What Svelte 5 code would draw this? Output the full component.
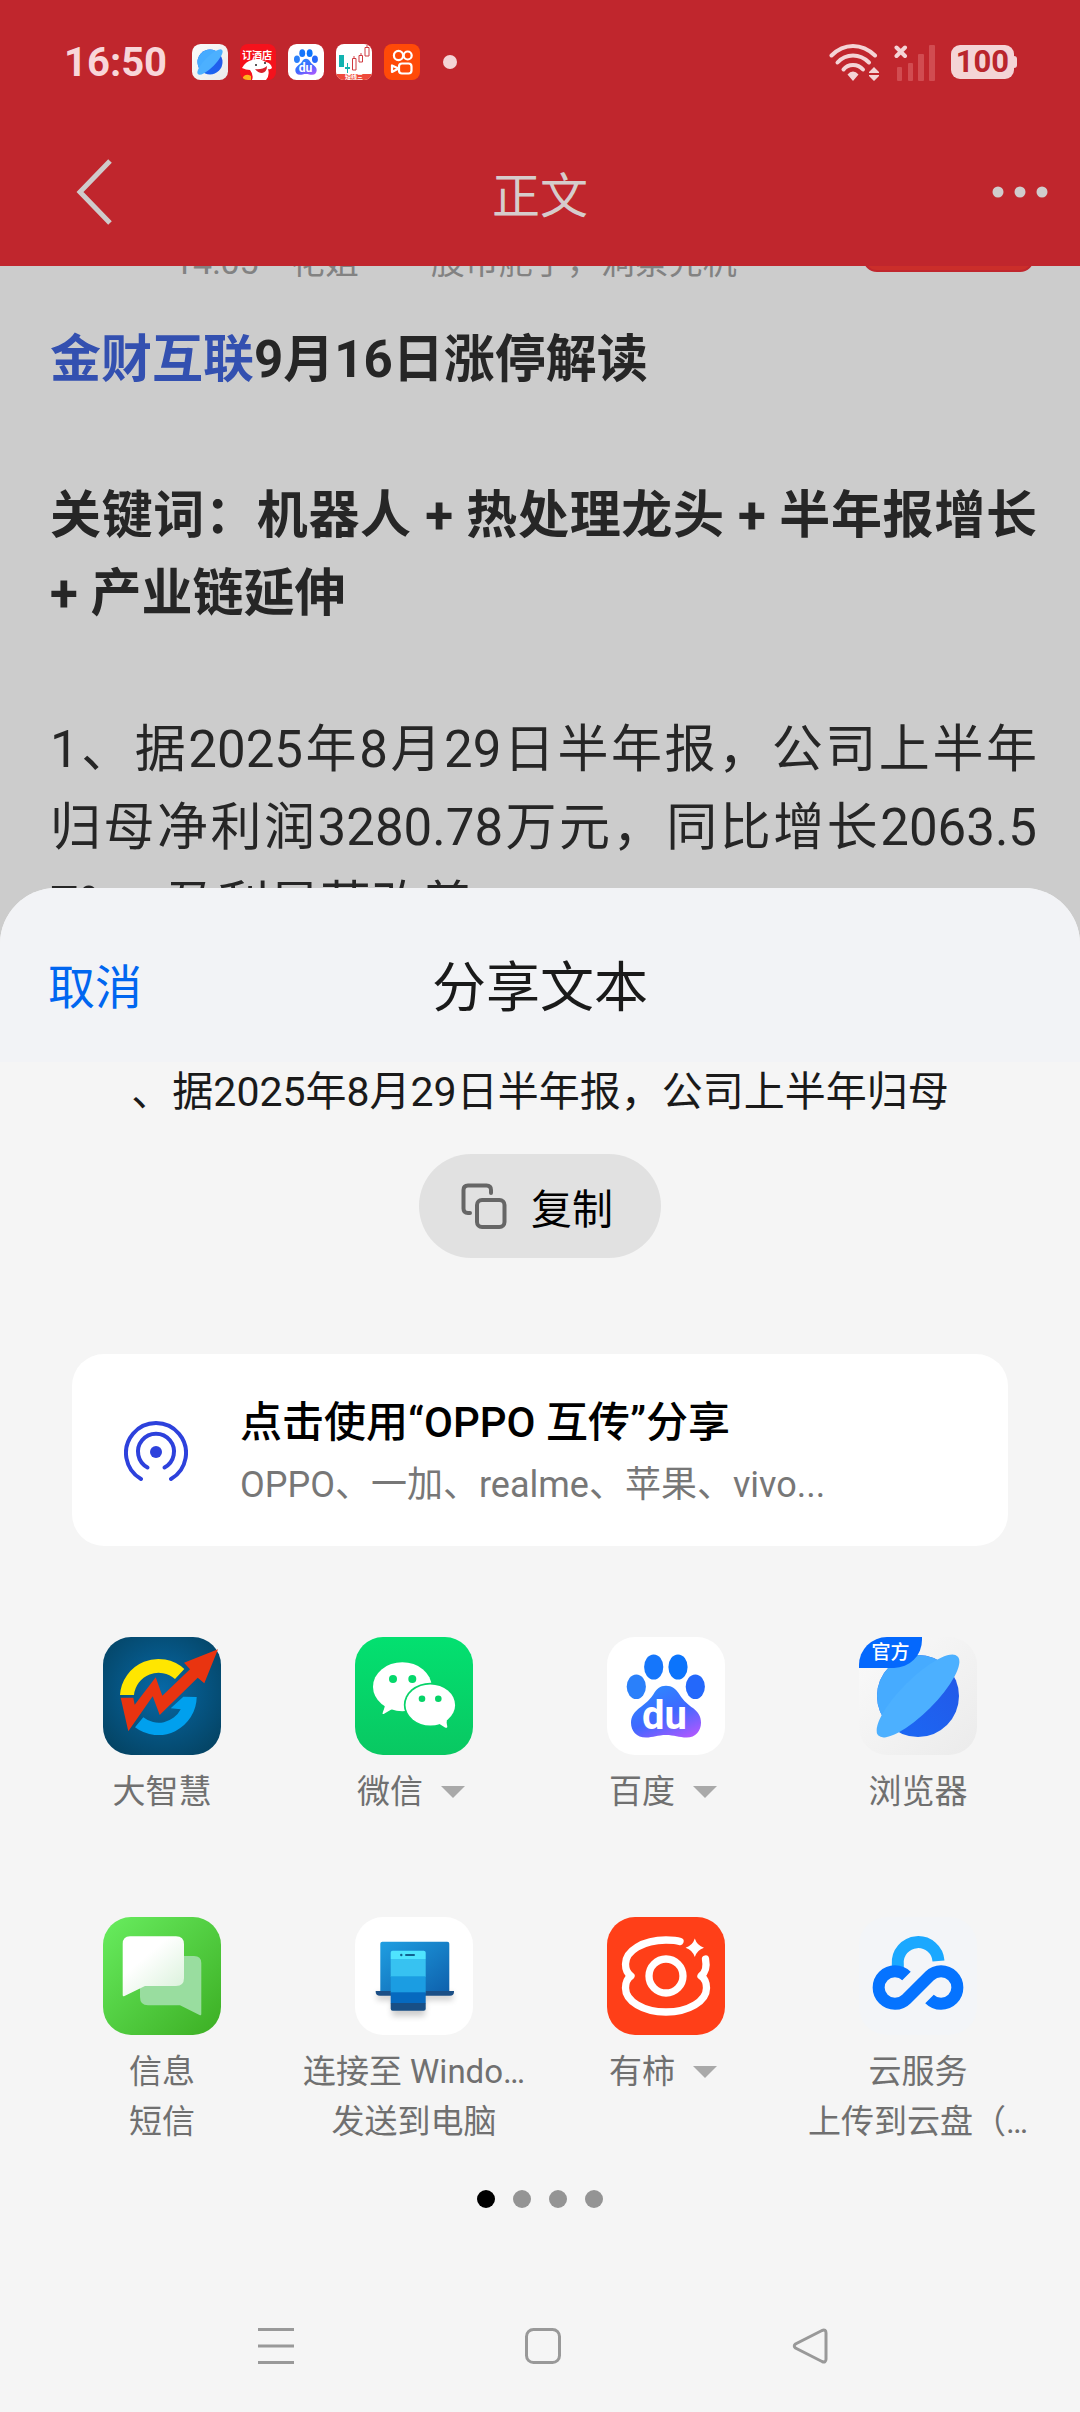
<script>
  const apps = [
    { icon: dzh, name: '大智慧' },
    { icon: wechat, name: '微信', more: true },
    { icon: baidu, name: '百度', more: true },
    { icon: browser, name: '浏览器', badge: '官方' },
    { icon: messages, name: '信息', detail: '短信' },
    { icon: phonelink, name: '连接至 Windo…', detail: '发送到电脑' },
    { icon: youshi, name: '有柿', more: true },
    { icon: cloud, name: '云服务', detail: '上传到云盘（…' }
  ]
  const notices = [browser, hotel, baidu, stocks, kwai]
  const pages = 4

  let page = $state(0)
</script>

{#snippet dzh()}
  <svg viewBox="0 0 118 118">
    <defs>
      <radialGradient id="dzh-bg" cx=".5" cy=".45" r=".7">
        <stop offset="0" stop-color="#0768a6" />
        <stop offset="1" stop-color="#04415f" />
      </radialGradient>
    </defs>
    <rect width="118" height="118" rx="28" fill="url(#dzh-bg)" />
    <path d="M17 58A38.5 38.5 0 0 1 81.3 32L72 42A24.7 24.7 0 0 0 31 58Z" fill="#ffe600" />
    <path d="M93.7 60A38.5 38.5 0 0 1 32 90.3L40.3 80.3A24.7 24.7 0 0 0 77.7 72.3L67.7 71.3L80.3 59.7Z" fill="#00a0ee" />
    <path d="M17.7 60.7L30.3 60.7L31.7 67.7L52.7 40.3L59.3 58.7L87 32.3L81 25.7L115 12.3L101.3 46.3L94.7 40.7L56.7 78L49.7 59.3L25.3 94.3Z" fill="#e93410" />
  </svg>
{/snippet}

{#snippet wechat()}
  <svg viewBox="0 0 118 118">
    <defs>
      <linearGradient id="wechat-bg" x2="0" y2="1">
        <stop offset="0" stop-color="#03e070" />
        <stop offset="1" stop-color="#09c862" />
      </linearGradient>
    </defs>
    <rect width="118" height="118" rx="28" fill="url(#wechat-bg)" />
    <g fill="#fff">
      <ellipse cx="47.3" cy="49.7" rx="29.3" ry="24.5" />
      <path d="M30 67C30 71 28 74 27.5 76.5Q28 77.5 29.5 76.5L38 71.5Q42 73.5 50 74L48 60Z" />
    </g>
    <circle cx="38" cy="42" r="4" fill="#05d86b" />
    <circle cx="57.3" cy="42" r="4" fill="#05d86b" />
    <ellipse cx="75.3" cy="68" rx="26.5" ry="22.2" fill="#06d368" />
    <g fill="#fff">
      <ellipse cx="75.3" cy="68" rx="24.8" ry="20.5" />
      <path d="M92 83C91 86 92.5 88.5 92.3 90Q91.7 91.5 90 90.4L84.5 87L76 88Z" />
    </g>
    <circle cx="67" cy="61.7" r="3.3" fill="#05d367" />
    <circle cx="83.3" cy="61.7" r="3.3" fill="#05d367" />
  </svg>
{/snippet}

{#snippet baidu()}
  <svg viewBox="0 0 118 118">
    <defs>
      <linearGradient id="baidu-paw" x1=".2" y1="0" x2=".8" y2="1">
        <stop offset="0" stop-color="#2b8bff" />
        <stop offset=".55" stop-color="#3f68ff" />
        <stop offset="1" stop-color="#a959ff" />
      </linearGradient>
    </defs>
    <rect width="118" height="118" rx="28" fill="#fff" />
    <ellipse cx="29.3" cy="49.7" rx="9.6" ry="12.3" fill="#2a80fa" />
    <ellipse cx="46.7" cy="30" rx="9.6" ry="12.6" fill="#1576fb" />
    <ellipse cx="71" cy="30" rx="9.6" ry="12.6" fill="#0b74fc" />
    <ellipse cx="88.3" cy="49.7" rx="9.6" ry="12.3" fill="#2368fb" />
    <path d="M59 48.7C65 48.7 69 52 72.5 57.5C77 64.5 81 67.5 86.3 71.3C91 75 94 79.5 94 85.7C94 94 88.5 100.5 79.7 100.5C72 100.5 67 98 59 98C51 98 46 100.5 39 100.5C29.5 100.5 24 94 24 85.7C24 79.5 27.5 75 32 71.3C37 67.5 41.5 64.5 46.3 57.5C49.5 52 53 48.7 59 48.7Z" fill="url(#baidu-paw)" />
    <text x="57.5" y="92.3" text-anchor="middle" font-size="40" font-weight="700" fill="#fff">du</text>
  </svg>
{/snippet}

{#snippet browser()}
  <svg viewBox="0 0 118 118">
    <defs>
      <linearGradient id="browser-bg" x2="1" y2="1">
        <stop offset="0" stop-color="#fafafa" />
        <stop offset="1" stop-color="#ebebeb" />
      </linearGradient>
      <linearGradient id="browser-dark" x1="1" y1="0" x2="0" y2="1">
        <stop offset="0" stop-color="#2456e6" />
        <stop offset="1" stop-color="#1a6af6" />
      </linearGradient>
    </defs>
    <rect width="118" height="118" rx="28" fill="url(#browser-bg)" />
    <circle cx="59" cy="59" r="41" fill="url(#browser-dark)" />
    <path d="M88 30A41 41 0 1 0 30 88Z" fill="#46abff" />
    <ellipse cx="59" cy="59" rx="56" ry="17" transform="rotate(-45 59 59)" fill="#4cb0ff" />
  </svg>
{/snippet}

{#snippet messages()}
  <svg viewBox="0 0 118 118">
    <defs>
      <linearGradient id="msg-bg" x2="1" y2="1">
        <stop offset="0" stop-color="#68ed5f" />
        <stop offset="1" stop-color="#3cae23" />
      </linearGradient>
      <linearGradient id="msg-front" x1=".2" y1=".2" x2=".9" y2="1">
        <stop offset=".2" stop-color="#fff" />
        <stop offset="1" stop-color="#d9f1da" />
      </linearGradient>
    </defs>
    <rect width="118" height="118" rx="28" fill="url(#msg-bg)" />
    <path d="M45 39H91Q98.3 39 98.3 46V97Q98.3 98.8 96.5 98L77 88.3H45Q37 88.3 37 80V47Q37 39 45 39Z" fill="#99dd9f" />
    <path d="M27 19.3H73Q81 19.3 81 27.3V61Q81 69 73 69H42L21.5 79Q19.7 79.8 19.7 78V27Q19.7 19.3 27 19.3Z" fill="url(#msg-front)" />
  </svg>
{/snippet}

{#snippet phonelink()}
  <svg viewBox="0 0 118 118">
    <defs>
      <linearGradient id="link-screen" x2="1" y2="1">
        <stop offset="0" stop-color="#1f9fe2" />
        <stop offset="1" stop-color="#0e60ac" />
      </linearGradient>
      <filter id="link-blur" x="-30%" y="-60%" width="160%" height="220%">
        <feGaussianBlur stdDeviation="3" />
      </filter>
      <clipPath id="link-phone"><rect x="35.7" y="33.7" width="35" height="60" rx="2" /></clipPath>
    </defs>
    <rect width="118" height="118" rx="28" fill="#fff" />
    <g filter="url(#link-blur)" fill="#000" opacity=".2">
      <rect x="22" y="76" width="76" height="7" />
      <rect x="37" y="80" width="33" height="19" />
    </g>
    <rect x="25.3" y="24.7" width="69" height="51" rx="2" fill="url(#link-screen)" />
    <path d="M20.7 74H99V75Q99 78.7 95 78.7H25Q20.7 78.7 20.7 75Z" fill="#1b4f86" />
    <g clip-path="url(#link-phone)">
      <rect x="35" y="33" width="37" height="9" fill="#4fe4fe" />
      <rect x="35" y="42" width="37" height="18" fill="#37c2f1" />
      <rect x="35" y="59.3" width="37" height="17" fill="#1b9de2" />
      <rect x="35" y="75.3" width="37" height="11" fill="#0669bf" />
      <rect x="35" y="86" width="37" height="8" fill="#184f86" />
    </g>
    <circle cx="46.3" cy="38" r="1.2" fill="#12608f" />
    <rect x="50" y="37" width="10" height="2" rx="1" fill="#12608f" />
  </svg>
{/snippet}

{#snippet youshi()}
  <svg viewBox="0 0 118 118">
    <rect width="118" height="118" rx="28" fill="#ff3f18" />
    <g fill="none" stroke="#fff" stroke-width="7.3" stroke-linecap="round" stroke-linejoin="round">
      <path d="M73 24.5C69 23 64 23 59 23C36 23 18.5 34 18.5 47C18.5 53 21 57 24 59C21 61 18.5 65 18.5 71C18.5 84 36 95 59 95C82 95 99.5 84 99.5 71C99.5 65 97 61 94 59C98 56 100 50 98.5 42" />
      <circle cx="59" cy="59" r="17" />
    </g>
    <path d="M87.8 21.5Q90 28.5 97 30.7Q90 33 87.8 40Q85.6 33 78.6 30.7Q85.6 28.5 87.8 21.5Z" fill="#fff" />
  </svg>
{/snippet}

{#snippet cloud()}
  <svg viewBox="0 0 118 118">
    <rect width="118" height="118" rx="28" fill="#f3f5f8" />
    <g fill="none" stroke-width="12">
      <path d="M38.8 51V47A20.3 20.3 0 0 1 79.5 44" stroke="#1aa8ff" />
      <path d="M47.5 59A16.3 16.3 0 1 0 47.5 82L70.5 59A16.3 16.3 0 1 1 70.5 82" stroke="#0573ff" />
    </g>
  </svg>
{/snippet}

{#snippet hotel()}
  <svg viewBox="0 0 36 36">
    <clipPath id="hotel-clip"><rect width="36" height="36" rx="8" /></clipPath>
    <g clip-path="url(#hotel-clip)">
      <rect width="36" height="36" fill="#f5121c" />
      <text x="17" y="15" text-anchor="middle" font-size="10" font-weight="700" fill="#fff">订酒店</text>
      <path d="M2 24Q6 17 12 16Q20 14 26 18Q31 19 32 24Q30 26 28 25Q30 31 26 36H12Q14 31 10 26Q6 26 2 24Z" fill="#fff" />
      <path d="M15 25Q22 26 27 22Q27 28 22 29Q18 29 15 25Z" fill="#d8232c" />
      <circle cx="16" cy="21" r="1" fill="#222" />
      <circle cx="25" cy="19" r="1" fill="#222" />
      <path d="M3 33Q6 29 11 32V36H3Z" fill="#ffb21c" />
    </g>
  </svg>
{/snippet}

{#snippet stocks()}
  <svg viewBox="0 0 36 36">
    <clipPath id="stocks-clip"><rect width="36" height="36" rx="8" /></clipPath>
    <g clip-path="url(#stocks-clip)">
      <rect width="36" height="36" fill="#fff" />
      <path d="M3 11H8V23H3ZM9 23H14V25H9ZM11 19H12V29H11Z" fill="#12b3b0" />
      <path d="M16.5 14.5H20V26H16.5ZM23 11.5H26.5V18H23ZM29 3.5H33V12H29ZM18 12V14M25 9V11M31 1V3" fill="none" stroke="#cf3a40" />
      <rect y="30" width="36" height="6" fill="#ee4a3c" />
      <text x="18" y="35" text-anchor="middle" font-size="6" font-weight="700" fill="#fff">短线三</text>
    </g>
  </svg>
{/snippet}

{#snippet kwai()}
  <svg viewBox="0 0 36 36">
    <rect width="36" height="36" rx="8" fill="#ff4a08" />
    <g fill="none" stroke="#fff" stroke-width="2.2" stroke-linejoin="round">
      <circle cx="14.5" cy="11.5" r="4.6" />
      <circle cx="23.7" cy="11.5" r="4" />
      <rect x="15" y="19.5" width="12.5" height="10" rx="3" />
      <path d="M14.5 24.5L8 21.5V28Z" />
    </g>
  </svg>
{/snippet}

<div class="screen">
  <div class="status">
    <time>16:50</time>
    <div class="notices">
      {#each notices as icon}
        <span class="notice">{@render icon()}</span>
      {/each}
      <i></i>
    </div>
    <div class="signals">
      <svg width="50" height="38" viewBox="0 0 50 38">
        <g fill="none" stroke="#f4d4d6" stroke-width="4" stroke-linecap="round">
          <path d="M2.5 12.5Q12 3 24 3Q36 3 46 12.5" />
          <path d="M8.5 19.5Q15 12.5 24 12.5Q33 12.5 40 19.5" />
          <path d="M14.5 26.5Q18 22 24 22Q30 22 34 26.5" />
        </g>
        <path d="M24 38L18.5 31.5Q21 28.5 24 28.5Q27 28.5 29.5 31.5ZM45 24L50 29V30H40V29ZM45 38L50 33V32H40V33Z" fill="#f4d4d6" />
      </svg>
      <svg width="42" height="38" viewBox="0 0 42 38">
        <path d="M2.5 4.5L11 13M11 4.5L2.5 13" stroke="#f4d4d6" stroke-width="4" stroke-linecap="round" />
        <g fill="#d14c51">
          <rect x="3" y="24" width="5" height="14" rx="1" />
          <rect x="14" y="20" width="5" height="18" rx="1" />
          <rect x="24" y="11" width="6" height="27" rx="1" />
          <rect x="35" y="2" width="6" height="36" rx="1" />
        </g>
      </svg>
      <span class="battery">100</span>
    </div>
  </div>

  <header>
    <button class="back" aria-label="返回">
      <svg width="40" height="68" viewBox="0 0 40 68">
        <path d="M36 3L6 34L36 65" fill="none" stroke="#cfcbcb" stroke-width="5" />
      </svg>
    </button>
    <h1>正文</h1>
    <button class="more" aria-label="更多">
      <svg width="56" height="12" viewBox="0 0 56 12" fill="#d0cccc">
        <circle cx="6" cy="6" r="5.5" />
        <circle cx="28" cy="6" r="5.5" />
        <circle cx="50" cy="6" r="5.5" />
      </svg>
    </button>
  </header>

  <article>
    <div class="byline">
      <span>14:05</span>
      <span class="author">花姐</span>
      <span class="motto">股市舵手，洞察先机</span>
      <button class="follow" aria-label="关注"></button>
    </div>
    <h2><a href="#stock">金财互联</a>9月16日涨停解读</h2>
    <h2>
      <span class="full">关键词：机器人 + 热处理龙头 + 半年报增长</span>
      <span>+ 产业链延伸</span>
    </h2>
    <p>
      <span class="full">1、据2025年8月29日半年报，公司上半年</span>
      <span class="full">归母净利润3280.78万元，同比增长2063.5</span>
      <span>7%，盈利显著改善</span>
    </p>
  </article>

  <section class="sheet">
    <div class="bar">
      <button class="cancel">取消</button>
      <h3>分享文本</h3>
    </div>
    <p class="preview">、据2025年8月29日半年报，公司上半年归母</p>
    <button class="copy">
      <svg width="46" height="46" viewBox="0 0 46 46" fill="none" stroke="#666" stroke-width="4" stroke-linecap="round">
        <path d="M30 10V7Q30 2.5 25.5 2.5H7Q2.5 2.5 2.5 7V25.5Q2.5 30 7 30H9" />
        <rect x="16" y="17" width="27.5" height="27" rx="5" />
      </svg>
      复制
    </button>

    <button class="oshare">
      <svg width="64" height="64" viewBox="0 0 64 64" fill="none" stroke="#2d41dc" stroke-width="4" stroke-linecap="round">
        <path d="M17 59A30 30 0 1 1 47 59" />
        <path d="M23.5 47.5A18 18 0 1 1 40.5 47.5" />
        <circle cx="32" cy="32" r="6" fill="#2d41dc" stroke="none" />
      </svg>
      <span class="text">
        <strong>点击使用“OPPO 互传”分享</strong>
        <small>OPPO、一加、realme、苹果、vivo...</small>
      </span>
    </button>

    <div class="apps">
      {#each apps as app}
        <button class="app">
          <span class="icon">
            {@render app.icon()}
            {#if app.badge}<b>{app.badge}</b>{/if}
          </span>
          <span class="name" class:expand={app.more}>{app.name}</span>
          {#if app.detail}<span class="name">{app.detail}</span>{/if}
        </button>
      {/each}
    </div>

    <div class="dots">
      {#each { length: pages } as _, i}
        <button class:active={page === i} aria-label="第 {i + 1} 页" onclick={() => page = i}></button>
      {/each}
    </div>

    <nav>
      <button aria-label="最近任务">
        <svg width="36" height="36" viewBox="0 0 36 36" fill="none" stroke="#999" stroke-width="3">
          <path d="M0 1.5H36M0 18H36M0 34.5H36" />
        </svg>
      </button>
      <button aria-label="主屏幕">
        <svg width="36" height="36" viewBox="0 0 36 36" fill="none" stroke="#999" stroke-width="3">
          <rect x="1.5" y="1.5" width="33" height="33" rx="7" />
        </svg>
      </button>
      <button aria-label="返回上级">
        <svg width="36" height="36" viewBox="0 0 36 36" fill="none" stroke="#999" stroke-width="3">
          <path d="M30 2.5L3.5 16Q1 18 3.5 20L30 33.5Q34 35 34 31V5Q34 1 30 2.5Z" />
        </svg>
      </button>
    </nav>
  </section>
</div>

<style>
  :global(body) {
    margin: 0;
    background: #f5f5f5;
  }

  .screen {
    display: flex;
    flex-direction: column;
    min-height: 100vh;
    background: #ccc;
    color: #262626;
    font-family: Roboto, 'Noto Sans CJK SC', sans-serif;
  }

  h1, h2, h3, p {
    margin: 0;
    font-weight: 400;
  }

  button {
    padding: 0;
    border: none;
    background: none;
    color: inherit;
    font: inherit;
    cursor: pointer;
  }

  svg {
    display: block;
    flex: none;
  }

  .status {
    display: flex;
    align-items: center;
    height: 124px;
    padding: 0 63px 0 64px;
    background: #c0262d;
    color: #f8d6d9;
  }

  time {
    font-size: 40px;
    font-weight: 700;
  }

  .notices {
    display: flex;
    align-items: center;
    gap: 12px;
    flex: 1;
    margin-left: 25px;
  }

  .notice {
    width: 36px;
  }

  .notices i {
    width: 14px;
    height: 14px;
    margin-left: 11px;
    border-radius: 50%;
    background: #f4d4d6;
  }

  .signals {
    display: flex;
    align-items: center;
    gap: 15px;
  }

  .battery {
    position: relative;
    padding: 0 5px;
    border-radius: 9px;
    margin-right: 3px;
    background: #f4d4d6;
    color: #b9252c;
    font-size: 31px;
    font-weight: 700;
    line-height: 34px;
  }

  .battery::after {
    content: '';
    position: absolute;
    top: 11px;
    right: -3px;
    width: 4px;
    height: 12px;
    border-radius: 0 3px 3px 0;
    background: #f4d4d6;
  }

  header {
    display: grid;
    grid-template-columns: 1fr auto 1fr;
    align-items: center;
    height: 142px;
    padding: 0 32px 6px;
    box-sizing: border-box;
    background: #c0262d;
    color: #d6cccc;
  }

  h1 {
    font-size: 48px;
  }

  .back {
    justify-self: start;
    margin-left: 42px;
  }

  .more {
    justify-self: end;
  }

  /* The text runs on behind the rounded top of the sheet */
  article {
    flex: 1 1 0;
    min-height: 0;
    margin-bottom: -56px;
    padding: 0 43px 0 50px;
    overflow: hidden;
    font-size: 51px;
    line-height: 78px;
  }

  .byline {
    display: flex;
    align-items: flex-end;
    height: 70px;
    margin: -54px 0 39px;
    padding-left: 124px;
    color: #828282;
    font-size: 34px;
    line-height: 40px;
  }

  .author {
    margin: 0 72px 0 32px;
  }

  .motto {
    flex: 1;
  }

  .follow {
    align-self: flex-start;
    width: 171px;
    height: 60px;
    margin-right: 3px;
    border: 2px solid #c0262d;
    border-radius: 14px;
    background: #cb2e2a;
  }

  h2 {
    margin-bottom: 78px;
    font-size: 51px;
    font-weight: 700;
  }

  h2 a {
    color: #3350b0;
    text-decoration: none;
  }

  h2 span, article p span {
    display: block;
    white-space: nowrap;
  }

  article .full {
    text-align: justify;
    text-align-last: justify;
  }

  .sheet {
    position: relative;
    display: flex;
    flex-direction: column;
    align-items: center;
    border-radius: 56px 56px 0 0;
    background: #f5f5f5;
    overflow: hidden;
  }

  .bar {
    display: grid;
    grid-template-columns: 1fr auto 1fr;
    align-items: center;
    align-self: stretch;
    height: 174px;
    padding: 16px 48px 0;
    box-sizing: border-box;
    background: #f2f3f6;
  }

  .cancel {
    justify-self: start;
    color: #0066f0;
    font-size: 47px;
  }

  h3 {
    color: #1a1a1a;
    font-size: 54px;
  }

  .preview {
    color: #1a1a1a;
    font-size: 41px;
    line-height: 60px;
  }

  .copy {
    display: flex;
    align-items: center;
    gap: 24px;
    height: 104px;
    margin-top: 32px;
    padding: 0 48px 0 42px;
    border-radius: 52px;
    background: #e1e1e1;
    color: #000;
    font-size: 41px;
  }

  .oshare {
    display: flex;
    align-items: center;
    align-self: stretch;
    gap: 52px;
    height: 192px;
    margin: 96px 72px 0;
    padding: 4px 52px 0;
    border-radius: 32px;
    background: #fff;
    text-align: left;
  }

  .text {
    display: flex;
    flex-direction: column;
    padding-top: 4px;
  }

  strong {
    color: #000;
    font-size: 42px;
    font-weight: 500;
    line-height: 62px;
  }

  small {
    color: #777;
    font-size: 36px;
    line-height: 62px;
  }

  .apps {
    display: grid;
    grid-template-columns: repeat(4, 1fr);
    align-self: stretch;
    gap: 50px 0;
    margin-top: 91px;
    padding: 0 36px;
  }

  .app {
    display: flex;
    flex-direction: column;
    align-items: center;
    min-height: 230px;
    color: #707070;
    font-size: 33px;
  }

  .icon {
    position: relative;
    width: 118px;
    margin-bottom: 12px;
  }

  .icon b {
    position: absolute;
    top: 0;
    left: 0;
    width: 63px;
    border-radius: 28px 0 28px 0;
    background: #0468fd;
    color: #fff;
    font-size: 19px;
    font-weight: 500;
    line-height: 31px;
  }

  .name {
    line-height: 50px;
    white-space: nowrap;
  }

  .expand {
    display: flex;
    align-items: center;
    gap: 18px;
    margin-right: 6px;
  }

  .expand::after {
    content: '';
    border: 12px solid transparent;
    border-top-color: #a9a9a9;
    border-bottom: none;
  }

  .dots {
    display: flex;
    gap: 18px;
    margin-top: 43px;
  }

  .dots button {
    width: 18px;
    height: 18px;
    border-radius: 50%;
    background: #949494;
  }

  .dots .active {
    background: #000;
  }

  nav {
    display: flex;
    justify-content: space-around;
    align-self: stretch;
    margin-top: 120px;
    padding: 0 136px 48px 142px;
  }
</style>
